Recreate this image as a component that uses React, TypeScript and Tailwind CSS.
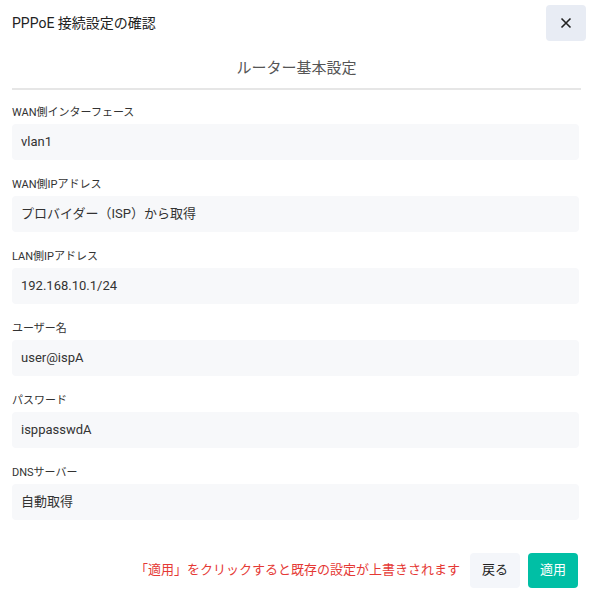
const fields = [
  { label: "WAN側インターフェース", value: "vlan1" },
  { label: "WAN側IPアドレス", value: "プロバイダー（ISP）から取得" },
  { label: "LAN側IPアドレス", value: "192.168.10.1/24" },
  { label: "ユーザー名", value: "user@ispA" },
  { label: "パスワード", value: "isppasswdA" },
  { label: "DNSサーバー", value: "自動取得" },
];

export default function App() {
  return (
    <div className="h-[605px] w-[593px] bg-white font-['Roboto','Noto_Sans_CJK_JP',sans-serif] text-[#333]">
      <div className="flex items-center justify-between pl-3 pr-[7px] pt-[5px]">
        <h1 className="text-[14px] font-normal text-[#222]">PPPoE 接続設定の確認</h1>
        <button className="flex h-[36px] w-[40px] items-center justify-center rounded bg-[#e8ecf4] text-[#222]">
          <svg width="12" height="12" viewBox="0 0 12 12" fill="none" stroke="currentColor" strokeWidth="1.6">
            <path d="M1.5 1.5l9 9M10.5 1.5l-9 9" />
          </svg>
        </button>
      </div>

      <div className="mx-3 mt-[16px] border-b-2 border-[#e6e6e6] pb-[8px] text-center text-[15px] text-[#555]">
        ルーター基本設定
      </div>

      <div className="mt-[14px] flex flex-col gap-[16px] px-3 pr-[14px]">
        {fields.map((f) => (
          <div key={f.label}>
            <div className="text-[11px] font-normal leading-[17px] text-[#333]">{f.label}</div>
            <div className="mt-[3px] flex h-[36px] items-center rounded-sm bg-[#f7f8fa] px-[9px] text-[13px] text-[#333]">
              {f.value}
            </div>
          </div>
        ))}
      </div>

      <div className="mt-[33px] flex items-center justify-end gap-2 pr-[15px]">
        <span className="mr-[2px] text-[13px] text-[#e53935]">「適用」をクリックすると既存の設定が上書きされます</span>
        <button className="h-[35px] w-[50px] rounded bg-[#f4f6fa] text-[13px] text-[#222]">戻る</button>
        <button className="h-[35px] w-[50px] rounded bg-[#00bfa5] text-[13px] text-white">適用</button>
      </div>
    </div>
  );
}
